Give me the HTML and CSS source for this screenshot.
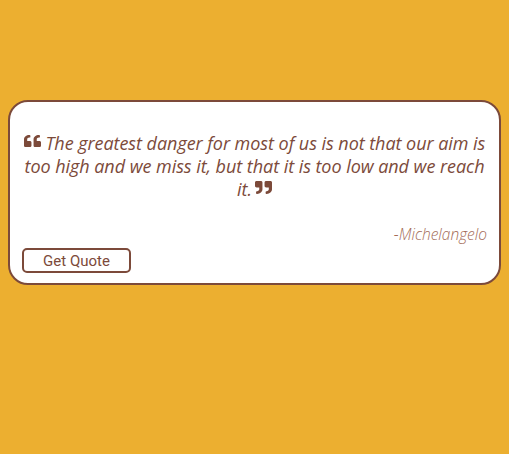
FILE: index.html
```html
<!DOCTYPE html>
<html lang="en">
<head>
<meta charset="utf-8">
<title>Random Quote</title>
<link rel="stylesheet" href="styles.css">
</head>
<body>
<div class="card" id="quote-box">
  <p class="quote" id="text"><svg class="qicon qleft" viewBox="0 32 512 448" preserveAspectRatio="none" aria-hidden="true"><path d="M464 256h-80v-64c0-35.3 28.7-64 64-64h8c13.3 0 24-10.7 24-24V56c0-13.3-10.7-24-24-24h-8c-88.4 0-160 71.6-160 160v240c0 26.5 21.5 48 48 48h128c26.5 0 48-21.5 48-48V304c0-26.5-21.5-48-48-48zm-288 0H96v-64c0-35.3 28.7-64 64-64h8c13.3 0 24-10.7 24-24V56c0-13.3-10.7-24-24-24h-8C71.6 32 0 103.6 0 192v240c0 26.5 21.5 48 48 48h128c26.5 0 48-21.5 48-48V304c0-26.5-21.5-48-48-48z"/></svg> The greatest danger for most of us is not that our aim is too high and we miss it, but that it is too low and we reach it.<svg class="qicon qright" viewBox="0 32 512 448" preserveAspectRatio="none" aria-hidden="true"><path d="M464 32H336c-26.5 0-48 21.5-48 48v128c0 26.5 21.5 48 48 48h80v64c0 35.3-28.7 64-64 64h-8c-13.3 0-24 10.7-24 24v48c0 13.3 10.7 24 24 24h8c88.4 0 160-71.6 160-160V80c0-26.5-21.5-48-48-48zm-288 0H48C21.5 32 0 53.5 0 80v128c0 26.5 21.5 48 48 48h80v64c0 35.3-28.7 64-64 64h-8c-13.3 0-24 10.7-24 24v48c0 13.3 10.7 24 24 24h8c88.4 0 160-71.6 160-160V80c0-26.5-21.5-48-48-48z"/></svg></p>
  <p class="author" id="author">-Michelangelo</p>
  <div class="actions">
    <button class="btn" id="new-quote">Get Quote</button>
  </div>
</div>
</body>
</html>
```
FILE: styles.css
```css
html, body {
  margin: 0;
  padding: 0;
}
body {
  background: #ecaf30;
  padding: 100px 8px 0 8px;
  height: 454px;
  box-sizing: border-box;
}
.card {
  background: #ffffff;
  border: 2px solid #7c4a3a;
  border-radius: 20px;
  padding: 30px 12px 10px 12px;
}
.quote {
  margin: 0;
  text-align: center;
  font-family: "Open Sans", sans-serif;
  font-style: italic;
  font-size: 18px;
  line-height: 23px;
  color: #7c4a3a;
  letter-spacing: -0.05px;
}
.qicon {
  width: 17px;
  height: 12px;
  fill: #7c4a3a;
}
.qleft {
  vertical-align: 3px;
}
.qright {
  margin-left: 3px;
  height: 13px;
  vertical-align: 2px;
}
.author {
  margin: 23px 0 0 0;
  text-align: right;
  font-family: "Open Sans", sans-serif;
  font-style: italic;
  font-weight: 300;
  font-size: 15.5px;
  line-height: 20px;
  color: #a46c58;
}
.actions {
  display: flex;
  margin-top: 4px;
}
.btn {
  background: #ffffff;
  border: 2px solid #7c4a3a;
  border-radius: 5px;
  width: 109px;
  height: 25px;
  padding: 0;
  font-family: Roboto, sans-serif;
  font-size: 15px;
  color: #7c4a3a;
  line-height: 20px;
}
```
